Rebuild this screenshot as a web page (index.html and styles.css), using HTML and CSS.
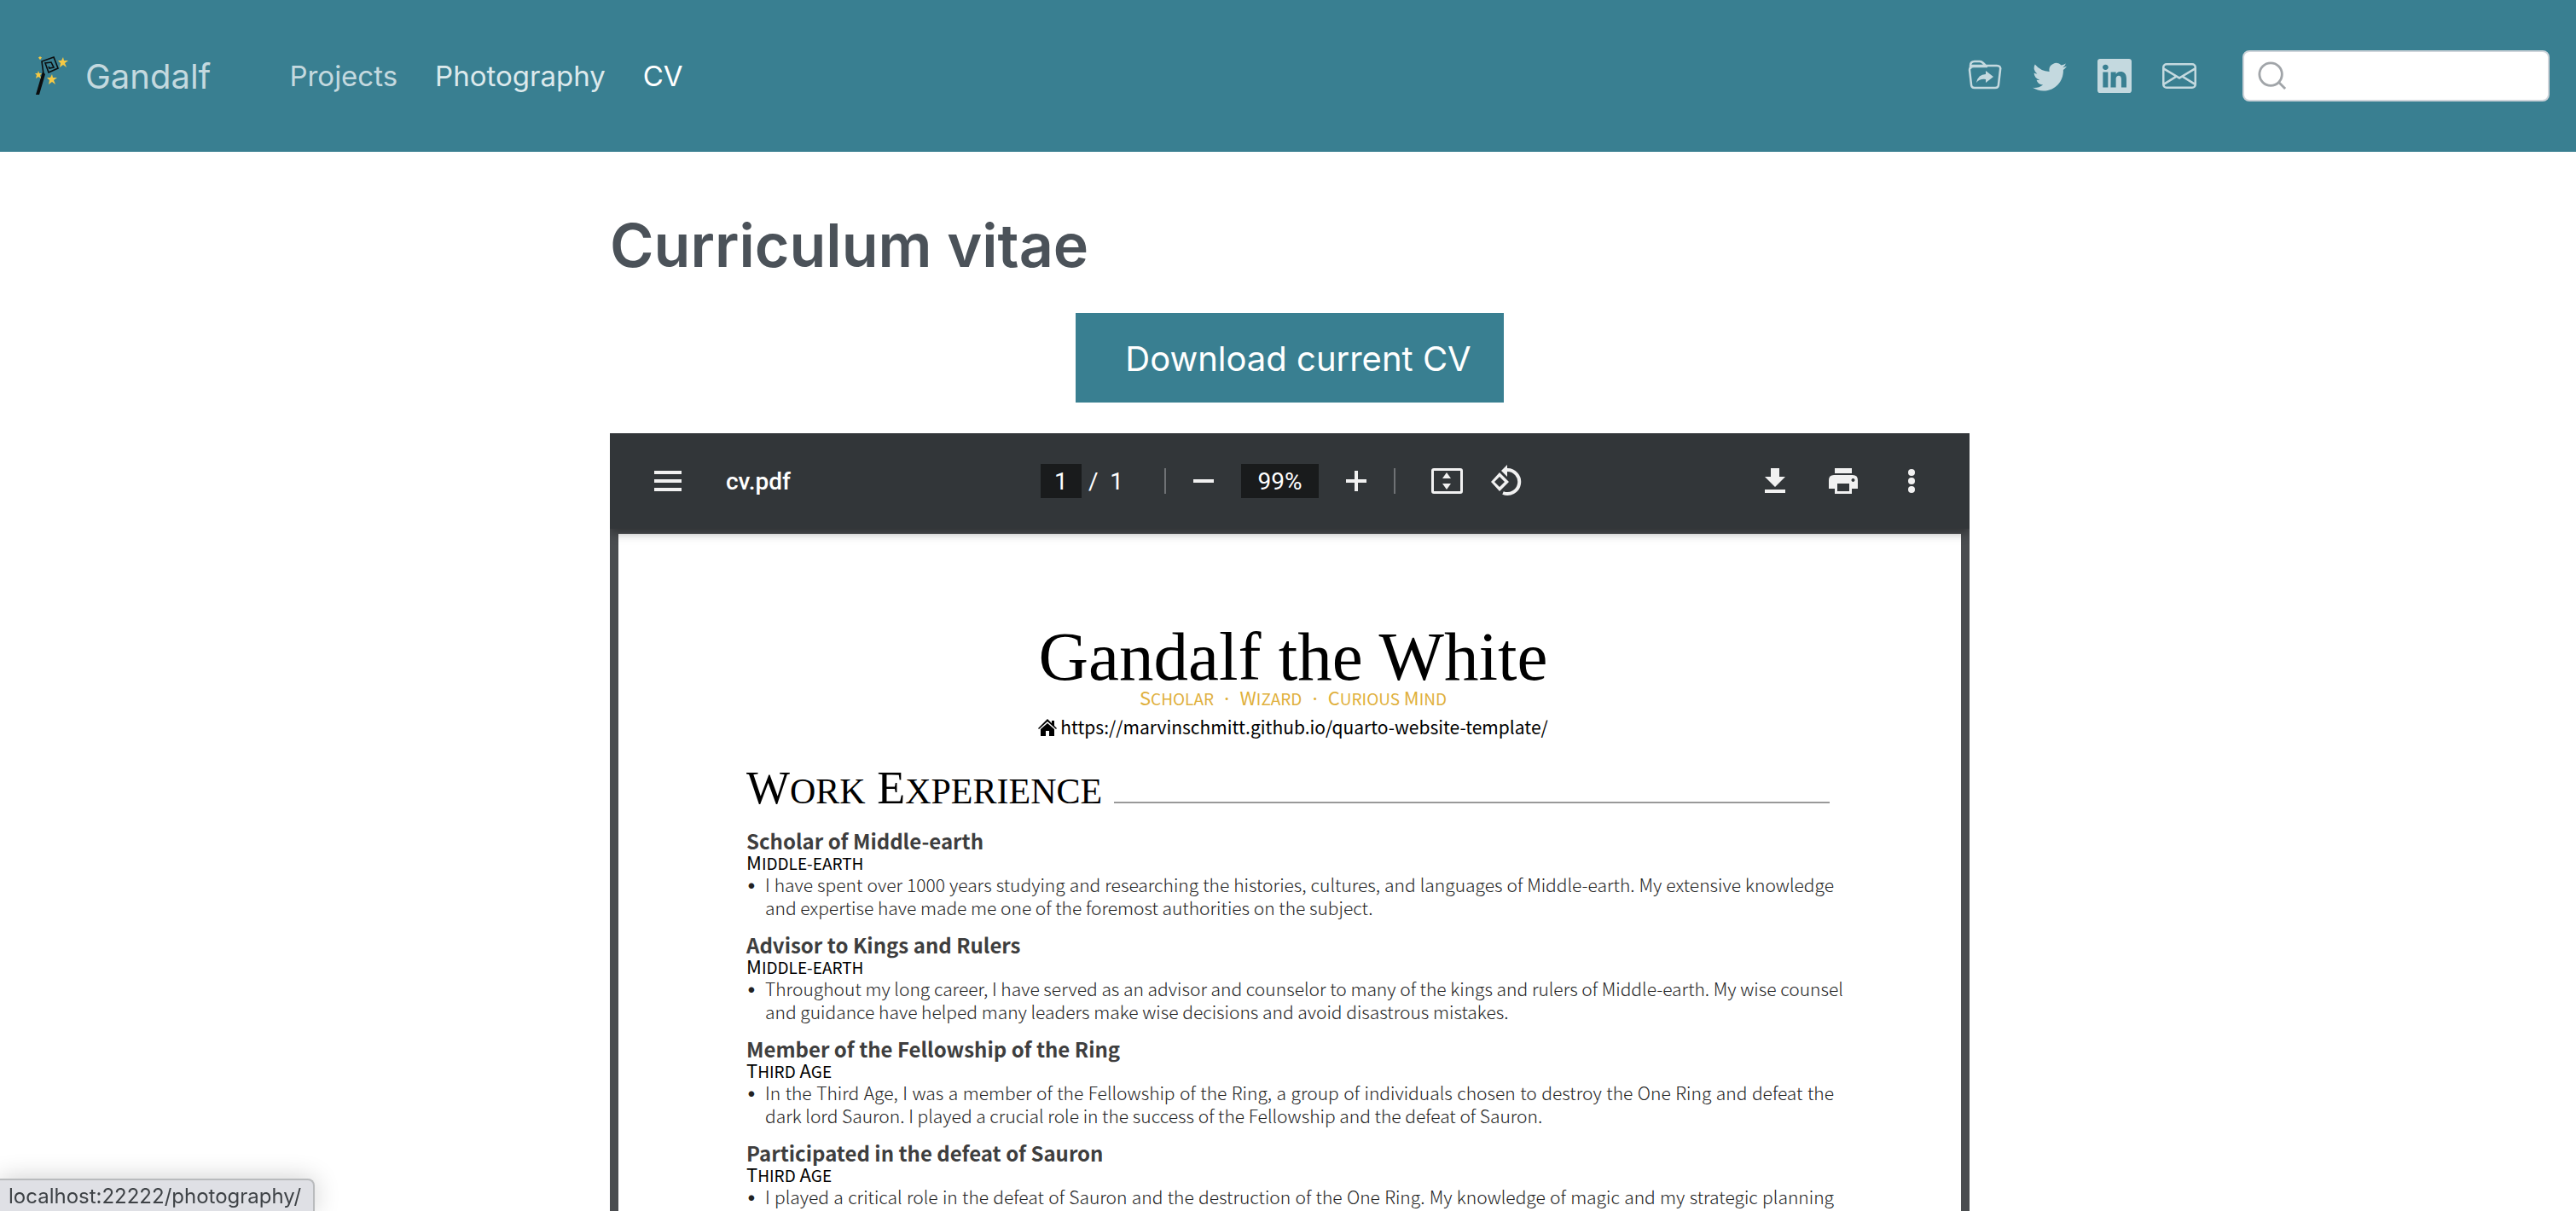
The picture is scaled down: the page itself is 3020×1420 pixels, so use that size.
FILE: index.html
```
<!DOCTYPE html>
<html lang="en">
<head>
<meta charset="utf-8">
<title>Gandalf - Curriculum vitae</title>
<link rel="stylesheet" href="styles.css">
</head>
<body>
<header class="navbar">
  <a class="brand" href="#">
    <svg class="wand" viewBox="0 0 40 56" aria-hidden="true">
      <path d="M11 26 9 11 23 6 28 19 17 24 13 13 20 12 23 18 18 19 17 17" fill="none" stroke="#0b0d0e" stroke-width="1.6"/>
      <path d="M2 50h4L13 26l-3-3-1 3z" fill="#0b0d0e"/>
      <g fill="#f6c944">
        <path d="m34 6 1 4h5l-4 3 2 5-4-3-4 3 1-5-3-3h4z"/>
        <path d="m21 26 1 4h5l-4 3 2 5-4-3-4 3 1-5-3-3h4z"/>
        <path d="m5 22 1 3h3l-2 2 1 4-3-2-3 2 1-4-2-2h3z"/>
        <path d="m7 5 1 1h1L8 8v1L7 8 6 9V8L5 6h1z"/>
      </g>
    </svg>
    <span>Gandalf</span>
  </a>
  <nav class="links">
    <a href="#">Projects</a>
    <a class="hovered" href="#">Photography</a>
    <a class="current" href="#" aria-current="page">CV</a>
  </nav>
  <nav class="tools" aria-label="Social links">
    <a href="#" aria-label="Research"><svg viewBox="0 0 40 40" fill="none" stroke="currentColor" stroke-width="2.5"><path d="M3 12V8q0-5 5-5h6q2 0 4 2l3 3h13q5 0 4 5l-2 17q0 4-4 4H8q-4 0-4-4L2 13q0-4 5-4h16M4 8h16"/><path d="M10 28q2-10 11-10v-4l9 7-9 7v-4q-7-1-11 4z" fill="currentColor" stroke="none"/></svg></a>
    <a href="#" aria-label="Twitter"><svg viewBox="0 0 16 16" fill="currentColor"><path d="M5.026 15c6.038 0 9.341-5.003 9.341-9.334 0-.14 0-.282-.006-.422A6.685 6.685 0 0 0 16 3.542a6.658 6.658 0 0 1-1.889.518 3.301 3.301 0 0 0 1.447-1.817 6.533 6.533 0 0 1-2.087.793A3.286 3.286 0 0 0 7.875 6.03a9.325 9.325 0 0 1-6.767-3.429 3.289 3.289 0 0 0 1.018 4.382A3.323 3.323 0 0 1 .64 6.575v.045a3.288 3.288 0 0 0 2.632 3.218 3.203 3.203 0 0 1-.865.115 3.23 3.23 0 0 1-.614-.057 3.283 3.283 0 0 0 3.067 2.277A6.588 6.588 0 0 1 .78 13.58a6.32 6.32 0 0 1-.78-.045A9.344 9.344 0 0 0 5.026 15z"/></svg></a>
    <a href="#" aria-label="LinkedIn"><svg viewBox="0 0 16 16" fill="currentColor"><path d="M0 1.146C0 .513.526 0 1.175 0h13.65C15.474 0 16 .513 16 1.146v13.708c0 .633-.526 1.146-1.175 1.146H1.175C.526 16 0 15.487 0 14.854V1.146zm4.943 12.248V6.169H2.542v7.225h2.401zm-1.2-8.212c.837 0 1.358-.554 1.358-1.248-.015-.709-.52-1.248-1.342-1.248-.822 0-1.359.54-1.359 1.248 0 .694.521 1.248 1.327 1.248h.016zm4.908 8.212V9.359c0-.216.016-.432.08-.586.173-.431.568-.878 1.232-.878.869 0 1.216.662 1.216 1.634v3.865h2.401V9.25c0-2.22-1.184-3.252-2.764-3.252-1.274 0-1.845.7-2.165 1.193v.025h-.016l.016-.025V6.169h-2.4c.03.678 0 7.225 0 7.225h2.4z"/></svg></a>
    <a href="#" aria-label="Email"><svg viewBox="0 0 16 16" fill="currentColor"><path d="M0 4a2 2 0 0 1 2-2h12a2 2 0 0 1 2 2v8a2 2 0 0 1-2 2H2a2 2 0 0 1-2-2V4Zm2-1a1 1 0 0 0-1 1v.217l7 4.2 7-4.2V4a1 1 0 0 0-1-1H2Zm13 2.383-4.708 2.825L15 11.105V5.383Zm-.034 6.876-5.64-3.471L8 9.583l-1.326-.795-5.64 3.47A1 1 0 0 0 2 13h12a1 1 0 0 0 .966-.741ZM1 11.105l4.708-2.897L1 5.383v5.722Z"/></svg></a>
  </nav>
  <label class="search">
    <svg viewBox="0 0 36 36" fill="none" stroke="#a1a5a9" stroke-width="3" aria-hidden="true"><circle cx="16" cy="16" r="14"/><path d="m26 26 8 8"/></svg>
    <input type="search" aria-label="Search">
  </label>
</header>

<main class="content">
  <h1>Curriculum vitae</h1>
  <div class="download-row"><a class="download" href="#">Download current CV</a></div>

  <section class="viewer" aria-label="cv.pdf">
    <div class="toolbar">
      <div class="group file">
        <button aria-label="Menu"><svg viewBox="0 0 48 48"><path d="M8 12h32v4H8zm0 10h32v4H8zm0 10h32v4H8z"/></svg></button>
        <span class="filename">cv.pdf</span>
      </div>
      <div class="group middle">
        <input class="page-no" aria-label="Page" value="1"><span class="page-count">/&nbsp; 1</span>
        <span class="rule"></span>
        <button aria-label="Zoom out"><svg viewBox="0 0 48 48"><path d="M12 22h24v4H12z"/></svg></button>
        <input class="zoom-level" aria-label="Zoom level" value="99%">
        <button aria-label="Zoom in"><svg viewBox="0 0 48 48"><path d="M22 12h4v10h10v4H26v10h-4V26H12v-4h10z"/></svg></button>
        <span class="rule second"></span>
        <button class="fit" aria-label="Fit to page"><svg viewBox="0 0 48 48"><path fill-rule="evenodd" d="M9 9h31q3 0 3 3v24q0 3-3 3H9q-3 0-3-3V12q0-3 3-3zm0 3v24h31V12zM24 14l5 7H19zm0 20-5-7h10z"/></svg></button>
        <button aria-label="Rotate"><svg viewBox="0 0 48 48"><path fill-rule="evenodd" d="M14 14 25 25 14 36 4 25zm0 5-6 6 6 6 6-6z"/><path d="M23 11a14 14 0 1 1-5 27" fill="none" stroke="#f1f1f1" stroke-width="4"/><path d="M23 5v14l-7-7z"/></svg></button>
      </div>
      <div class="group actions">
        <button aria-label="Download"><svg viewBox="0 0 48 48"><path d="M19 9h10v10h7L24 31 12 19h7zM12 34h24v4H12z"/></svg></button>
        <button aria-label="Print"><svg viewBox="0 0 48 48"><path fill-rule="evenodd" d="M14 9h20v6H14zM13 17h22q6 0 6 6v10h-7v6H14v-6H7V23q0-6 6-6zm4 10v9h14v-9zm18-6a2 2 0 1 0 1 0z"/></svg></button>
        <button aria-label="More"><svg viewBox="0 0 48 48"><circle cx="24" cy="14" r="4"/><circle cx="24" cy="24" r="4"/><circle cx="24" cy="34" r="4"/></svg></button>
      </div>
    </div>
    <div class="canvas">
      <article class="page">
        <h2 class="name">Gandalf the White</h2>
        <p class="tagline caps"><span>Scholar</span><b>·</b><span>Wizard</span><b>·</b><span>Curious</span> <span>Mind</span></p>
        <p class="site"><svg viewBox="0 0 22 20" aria-hidden="true"><path d="m11 0 5 5V2h3v6l3 3-1 1L11 3 1 12l-1-1zM11 5l8 7v8h-6v-6H9v6H3v-8z"/></svg><a href="#">https://marvinschmitt.github.io/quarto-website-template/</a></p>
        <h3 class="section"><span class="caps"><span>Work</span> <span>Experience</span></span></h3>
        <section class="job">
          <h4>Scholar of Middle-earth</h4>
          <p class="place caps"><span>Middle-earth</span></p>
          <ul><li><p><span class="full">I have spent over 1000 years studying and researching the histories, cultures, and languages of Middle-earth. My extensive knowledge</span><span>and expertise have made me one of the foremost authorities on the subject.</span></p></li></ul>
        </section>
        <section class="job">
          <h4>Advisor to Kings and Rulers</h4>
          <p class="place caps"><span>Middle-earth</span></p>
          <ul><li><p><span class="full">Throughout my long career, I have served as an advisor and counselor to many of the kings and rulers of Middle-earth. My wise counsel</span><span>and guidance have helped many leaders make wise decisions and avoid disastrous mistakes.</span></p></li></ul>
        </section>
        <section class="job">
          <h4>Member of the Fellowship of the Ring</h4>
          <p class="place caps"><span>Third</span> <span>Age</span></p>
          <ul><li><p><span class="full">In the Third Age, I was a member of the Fellowship of the Ring, a group of individuals chosen to destroy the One Ring and defeat the</span><span>dark lord Sauron. I played a crucial role in the success of the Fellowship and the defeat of Sauron.</span></p></li></ul>
        </section>
        <section class="job">
          <h4>Participated in the defeat of Sauron</h4>
          <p class="place caps"><span>Third</span> <span>Age</span></p>
          <ul><li><p><span class="full">I played a critical role in the defeat of Sauron and the destruction of the One Ring. My knowledge of magic and my strategic planning</span></p></li></ul>
        </section>
      </article>
    </div>
  </section>
</main>
<div class="status">localhost:22222/photography/</div>
</body>
</html>
```

FILE: styles.css
```
* { box-sizing: border-box; }
html, body { height: 100%; }
body {
  margin: 0;
  display: flex;
  flex-direction: column;
  overflow: hidden;
  background: #fff;
  font-family: Inter, sans-serif;
}
a { color: inherit; text-decoration: none; }
h1, h2, h3, h4, p, ul { margin: 0; padding: 0; }
svg { display: block; }

.navbar {
  flex: none;
  display: flex;
  align-items: center;
  height: 178px;
  padding: 0 31px 0 40px;
  background: #397f91;
  color: #c4d9df;
}
.brand { display: flex; align-items: center; gap: 20px; font-size: 40px; }
.wand { width: 40px; height: 56px; }
.links { display: flex; gap: 44px; margin-left: 92px; font-size: 33px; }
.hovered { color: #dce9ec; }
.current { color: #fff; }
.tools { display: flex; gap: 36px; margin-left: auto; }
.tools svg { width: 40px; height: 40px; }
.search {
  display: flex;
  align-items: center;
  width: 360px;
  height: 60px;
  margin-left: 54px;
  padding: 0 16px;
  background: #fff;
  border: 2px solid #ced4da;
  border-radius: 8px;
}
.search svg { flex: none; width: 34px; height: 34px; }
.search input {
  flex: 1;
  min-width: 0;
  border: 0;
  outline: 0;
  background: none;
  font: 32px Inter, sans-serif;
}

.content {
  flex: 1;
  min-height: 0;
  display: flex;
  flex-direction: column;
  width: 1598px;
  max-width: 100%;
  margin: 0 auto;
  padding: 60px 0 0 4px;
}
h1 { color: #4b5259; font-size: 70px; line-height: 100px; font-weight: 600; }
.download-row { display: flex; justify-content: center; margin: 29px 0 36px; }
.download {
  padding: 2px 38px 0 58px;
  background: #397f91;
  color: #fff;
  font-size: 40px;
  line-height: 103px;
}

.viewer { flex: 1; min-height: 0; display: flex; flex-direction: column; overflow: hidden; }
.toolbar {
  flex: none;
  display: grid;
  grid-template-columns: 1fr auto 1fr;
  align-items: center;
  height: 112px;
  background: #323639;
  color: #fff;
  font-family: Roboto, sans-serif;
  font-size: 28px;
  box-shadow: 0 4px 12px #0006;
  z-index: 1;
}
.group { display: flex; align-items: center; }
.toolbar button { padding: 0; border: 0; background: none; }
.toolbar button svg { width: 48px; height: 48px; fill: #f1f1f1; }
.toolbar input {
  height: 40px;
  padding: 0;
  border: 0;
  background: #191b1c;
  color: #fff;
  font: 28px Roboto, sans-serif;
  text-align: center;
}
.file { padding-left: 44px; gap: 44px; }
.filename { font-weight: 500; }
.middle { padding-right: 12px; }
.page-no { width: 48px; }
.page-count { margin-left: 8px; }
.zoom-level { width: 91px; margin: 0 20px; }
.rule { width: 2px; height: 30px; margin: 0 20px 0 48px; background: #6f7275; }
.rule.second { margin: 0 36px 0 20px; }
.fit { margin-right: 24px; }
.actions { justify-content: flex-end; gap: 32px; padding-right: 44px; }

.canvas { flex: 1; min-height: 0; padding: 6px 10px 0; background: #4a4d50; }
.page {
  height: 100%;
  padding: 110px 142px 0 150px;
  overflow: hidden;
  background: #fff;
  color: #000;
  font-family: "Noto Sans CJK SC", sans-serif;
  font-size: 21px;
  line-height: 27px;
}
.name {
  font: 400 81px/68px "Liberation Serif", serif;
  text-align: center;
}

/* Small capitals: each word is upper case with a larger initial. */
.caps > span { display: inline-block; font-size: 19px; text-transform: uppercase; }
.caps > span::first-letter { font-size: 22px; }

.tagline { height: 27px; color: #dfb03c; text-align: center; }
.tagline b { padding: 0 12px; font-family: Inter, sans-serif; font-weight: 500; }
.site { display: flex; justify-content: center; align-items: center; gap: 4px; margin-top: 8px; }
.site svg { width: 22px; height: 20px; }
.section {
  display: flex;
  align-items: baseline;
  gap: 14px;
  margin: 28px 12px 14px 0;
  font: 400 54px/60px "Liberation Serif", serif;
}
.section .caps > span { font-size: 42px; }
.section .caps > span::first-letter { font-size: 54px; }
.section::after { content: ""; flex: 1; height: 2px; background: #999; }
.job { margin-bottom: 16px; }
.job h4 { color: #3e3e3e; font-size: 24px; line-height: 27px; font-weight: 700; }
.place { height: 25px; line-height: 23px; }
.job ul { list-style: none; }
.job li { display: flex; width: 1275px; color: #222; font-weight: 300; }
.job li::before {
  content: "•";
  flex: 0 0 22px;
  min-width: 0;
  font-family: Inter, sans-serif;
  font-weight: 400;
}
.job li p { flex: 1; min-width: 0; }
.job li span { display: block; white-space: nowrap; }
.job li .full { text-align-last: justify; }

.status {
  position: fixed;
  left: 0;
  bottom: 0;
  padding: 2px 14px 0 10px;
  background: #dfe0e5;
  border: solid #b9bbbd;
  border-width: 2px 2px 0 0;
  border-top-right-radius: 8px;
  box-shadow: 0 0 30px #0003;
  color: #3e4246;
  font-size: 24px;
  line-height: 34px;
}
```
